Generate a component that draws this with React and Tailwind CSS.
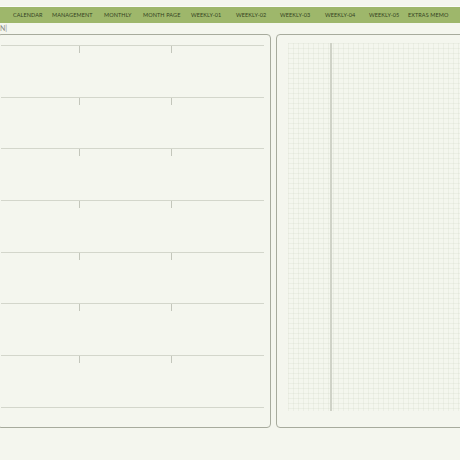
import React from "react";

const tabs = [
  ["CALENDAR", 39],
  ["MANAGEMENT", 52],
  ["MONTHLY", 39],
  ["MONTH PAGE", 48],
  ["WEEKLY-01", 45],
  ["WEEKLY-02", 44],
  ["WEEKLY-03", 45],
  ["WEEKLY-04", 44],
  ["WEEKLY-05", 39],
  ["EXTRAS MEMO", 52],
];

function Row() {
  return (
    <div className="h-[51.7px] border-t border-[#d3d6cb]">
      <div className="flex h-[7px] gap-[91px] pl-[78px]">
        <div className="w-px bg-[#c3c6bb]" />
        <div className="w-px bg-[#c3c6bb]" />
      </div>
    </div>
  );
}

export default function App() {
  return (
    <div
      className="w-[460px] h-[460px] overflow-hidden bg-[#f4f6ee]"
      style={{ fontFamily: "Lato, 'Open Sans', sans-serif" }}
    >
      <div className="h-[7px] border-b border-[#fbfcf8]" />
      <div className="flex h-[16px] items-center bg-[#9eb76b] pl-[13px] text-[5.5px] tracking-[0.1px] text-[#34421f]">
        {tabs.map(([t, w]) => (
          <span key={t} className="shrink-0 whitespace-nowrap" style={{ width: w }}>
            {t}
          </span>
        ))}
      </div>
      <div className="h-[11px] pt-[1px] text-[7px] leading-[8px] text-[#8a8d84]">N|</div>

      <div className="flex gap-[5px] -ml-[3px]">
        <div className="w-[274px] shrink-0 h-[394px] rounded-[4px] border-[1.5px] border-[#a7ab9d] pt-[10px] pl-[3px] pr-[6px]">
          {[0, 1, 2, 3, 4, 5, 6].map((i) => (
            <Row key={i} />
          ))}
          <div className="border-t border-[#d3d6cb]" />
        </div>
        <div className="w-[200px] shrink-0 h-[394px] rounded-[4px] border-[1.5px] border-[#a7ab9d] pt-[8px] pl-[11px]">
          <div className="flex h-[368px] pl-[42px] bg-[linear-gradient(to_right,rgba(200,208,190,0.2)_1px,transparent_1px),linear-gradient(to_bottom,rgba(200,208,190,0.2)_1px,transparent_1px)] bg-[size:5px_5px]">
            <div className="h-full w-[1.5px] bg-[#cfd2c7]" />
          </div>
        </div>
      </div>
    </div>
  );
}
